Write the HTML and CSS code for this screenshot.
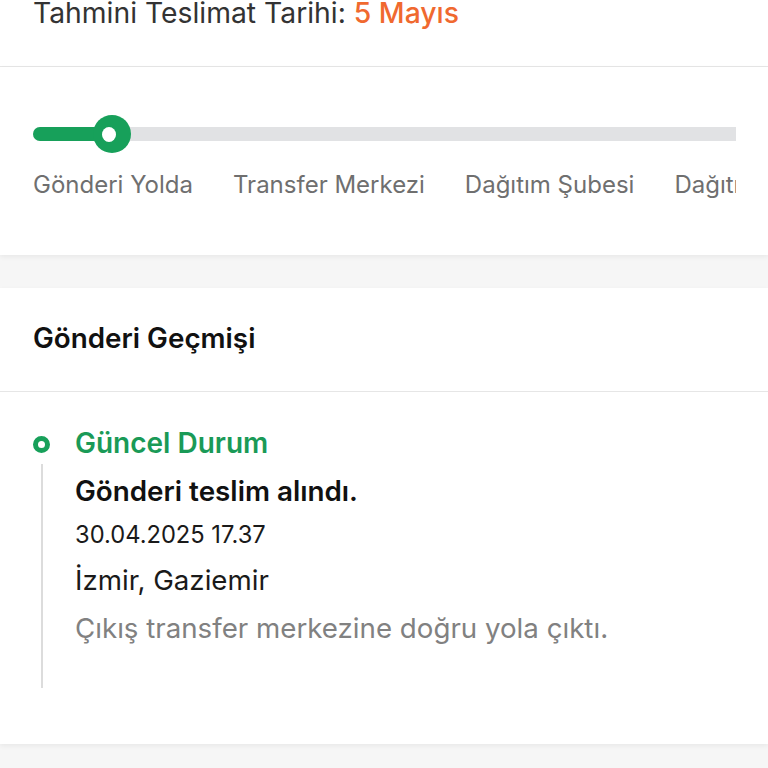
FILE: index.html
```html
<!DOCTYPE html>
<html lang="tr">
<head>
<meta charset="utf-8">
<title>Gönderi Takip</title>
<link rel="stylesheet" href="styles.css">
</head>
<body>
<div class="page">
  <header class="eta">
    <p class="eta-text">Tahmini Teslimat Tarihi: <span class="eta-date">5 Mayıs</span></p>
  </header>

  <section class="card progress">
    <div class="tracker">
      <div class="track">
        <div class="fill"></div>
        <span class="knob"><span class="knob-hole"></span></span>
      </div>
      <div class="steps">
        <span class="step">Gönderi Yolda</span>
        <span class="step">Transfer Merkezi</span>
        <span class="step">Dağıtım Şubesi</span>
        <span class="step">Dağıtımda</span>
        <span class="step">Teslim Edildi</span>
      </div>
    </div>
  </section>

  <section class="card history">
    <h2 class="history-title">Gönderi Geçmişi</h2>
    <div class="timeline">
      <div class="event">
        <div class="rail">
          <span class="dot"></span>
          <span class="line"></span>
        </div>
        <div class="event-body">
          <p class="event-status">Güncel Durum</p>
          <p class="event-title">Gönderi teslim alındı.</p>
          <p class="event-date">30.04.2025 17.37</p>
          <p class="event-place">İzmir, Gaziemir</p>
          <p class="event-desc">Çıkış transfer merkezine doğru yola çıktı.</p>
        </div>
      </div>
    </div>
  </section>
</div>
</body>
</html>
```

FILE: styles.css
```css
* { box-sizing: border-box; }

html, body {
  margin: 0;
  padding: 0;
  background: #f6f6f6;
  font-family: Inter, "Noto Sans", "Liberation Sans", sans-serif;
}

p, h2 { margin: 0; }

.page {
  width: 768px;
  height: 768px;
  overflow: hidden;
}

/* ETA header */
.eta {
  display: flow-root;
  background: #ffffff;
  height: 67px;
  padding: 0 33px;
  border-bottom: 1px solid #e6e6e6;
}

.eta-text {
  margin-top: -4px;
  font-size: 28.3px;
  line-height: 34px;
  color: #333333;
}

.eta-date {
  color: #f0692f;
  font-weight: 500;
}

/* cards */
.card {
  background: #ffffff;
  box-shadow: 0 2px 5px rgba(0, 0, 0, 0.06);
}

.progress {
  height: 188px;
  padding: 44px 32px 0 33px;
}

.tracker {
  overflow: hidden;
  padding-top: 16px;
}

.track {
  position: relative;
  height: 14px;
  background: #e1e2e4;
  border-radius: 7px 0 0 7px;
}

.fill {
  width: 80px;
  height: 14px;
  background: #17a05a;
  border-radius: 7px;
}

.knob {
  position: absolute;
  left: 60px;
  top: -12px;
  width: 38px;
  height: 38px;
  border-radius: 50%;
  background: #17a05a;
}

.knob-hole {
  position: absolute;
  left: 9px;
  top: 12px;
  width: 14px;
  height: 15px;
  border-radius: 50%;
  background: #ffffff;
}

.steps {
  display: flex;
  gap: 40px;
  margin-top: 30px;
  white-space: nowrap;
}

.step {
  font-size: 24px;
  line-height: 28px;
  color: #6f6f6f;
  flex: none;
}

/* history */
.history {
  margin-top: 33px;
  height: 456px;
}

.history-title {
  padding: 33px 33px 36px;
  font-size: 27.8px;
  line-height: 34px;
  font-weight: 600;
  color: #111111;
  border-bottom: 1px solid #e6e6e6;
}

.timeline {
  padding: 34px 33px 0;
}

.event {
  display: flex;
  gap: 25px;
}

.rail {
  width: 17px;
  display: flex;
  flex-direction: column;
  align-items: center;
  padding-top: 10px;
}

.dot {
  width: 17px;
  height: 17px;
  border-radius: 50%;
  border: 5px solid #17a05a;
  background: #ffffff;
  flex: none;
}

.line {
  width: 2px;
  height: 224px;
  margin-top: 11px;
  background: #dcdcdc;
}

.event-status {
  font-size: 28px;
  line-height: 34px;
  font-weight: 600;
  color: #1a9a57;
}

.event-title {
  margin-top: 14px;
  font-size: 27.8px;
  line-height: 34px;
  font-weight: 600;
  color: #111111;
}

.event-date,
.event-place,
.event-desc {
  font-size: 27.7px;
  line-height: 32px;
  color: #1a1a1a;
}

.event-date {
  margin-top: 12px;
  font-size: 23.7px;
  line-height: 30px;
}
.event-place { margin-top: 14px; }
.event-desc { margin-top: 16px; color: #818181; }
```
